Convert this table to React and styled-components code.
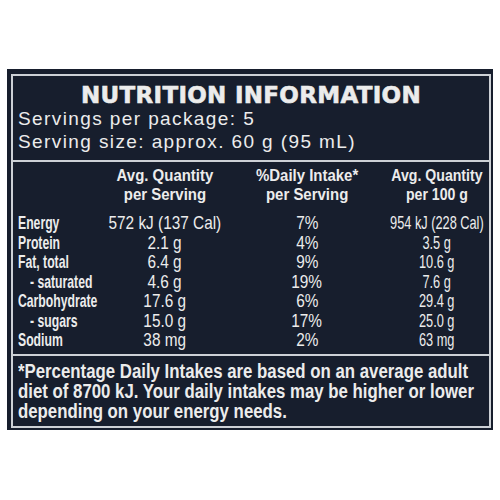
import React from 'react';
import styled, { createGlobalStyle } from 'styled-components';

const GlobalStyle = createGlobalStyle`
  html, body {
    margin: 0;
    padding: 0;
    background: #ffffff;
  }
`;

const Page = styled.div`
  width: 500px;
  height: 500px;
  padding: 69px 0 0 7px;
  box-sizing: border-box;
`;

const Panel = styled.div`
  width: 486px;
  height: 361px;
  box-sizing: border-box;
  padding: 5px 2px 2px 4px;
  background: #171e2d;
  color: #ececec;
`;

const Frame = styled.div`
  height: 100%;
  box-sizing: border-box;
  border: 2px solid #cdd1d6;
  display: flex;
  flex-direction: column;
  overflow: hidden;
`;

const Intro = styled.div`
  padding: 7px 0 7px 5px;
  border-bottom: 2px solid #cdd1d6;
`;

const Title = styled.h1`
  margin: 0;
  font-family: "DejaVu Sans", sans-serif;
  font-weight: bold;
  font-size: 23px;
  line-height: 24px;
  text-align: center;
  padding-right: 5px;
  letter-spacing: 0.3px;
  -webkit-text-stroke: 0.6px #ececec;
`;

const ServingLine = styled.div`
  font-family: "Liberation Sans", Arial, sans-serif;
  font-size: 19px;
  line-height: 23px;
  letter-spacing: 1.4px;
`;

const Table = styled.div`
  display: grid;
  grid-template-columns: 87px 119px 166px 94px;
  padding: 4px 0 4px 5px;
  border-bottom: 2px solid #cdd1d6;
  font-family: "Liberation Sans", Arial, sans-serif;
`;

/* the print uses a condensed face; squeeze a regular one to match */
const Squeeze = styled.span`
  display: inline-block;
  white-space: nowrap;
  transform: scaleX(${({ $x }) => $x});
  transform-origin: ${({ $origin }) => $origin || 'center'};
`;

const Head = styled.div`
  justify-self: center;
  text-align: center;
  font-weight: bold;
  font-size: 17px;
  line-height: 19px;
  margin-bottom: 9px;
`;

const Label = styled.div`
  font-weight: bold;
  font-size: 18.5px;
  line-height: 19.5px;
  padding-left: ${({ $sub }) => ($sub ? '12px' : '0')};
`;

const Value = styled.div`
  justify-self: center;
  font-size: 18.5px;
  line-height: 19.5px;
`;

const Footnote = styled.div`
  padding: 5px 0 0 5px;
  font-family: "Liberation Sans", Arial, sans-serif;
  font-weight: bold;
  font-size: 20px;
  line-height: 20px;
`;

const NoteLine = styled.div`
  white-space: nowrap;
`;

const rows = [
  { name: 'Energy', serve: '572 kJ (137 Cal)', di: '7%', per100: '954 kJ (228 Cal)' },
  { name: 'Protein', serve: '2.1 g', di: '4%', per100: '3.5 g' },
  { name: 'Fat, total', serve: '6.4 g', di: '9%', per100: '10.6 g' },
  { name: '- saturated', sub: true, serve: '4.6 g', di: '19%', per100: '7.6 g' },
  { name: 'Carbohydrate', serve: '17.6 g', di: '6%', per100: '29.4 g' },
  { name: '- sugars', sub: true, serve: '15.0 g', di: '17%', per100: '25.0 g' },
  { name: 'Sodium', serve: '38 mg', di: '2%', per100: '63 mg' },
];

const notes = [
  '*Percentage Daily Intakes are based on an average adult',
  'diet of 8700 kJ. Your daily intakes may be higher or lower',
  'depending on your energy needs.',
];

export default function App() {
  return (
    <Page>
      <GlobalStyle />
      <Panel>
        <Frame>
          <Intro>
            <Title>NUTRITION INFORMATION</Title>
            <ServingLine>Servings per package: 5</ServingLine>
            <ServingLine>Serving size: approx. 60 g (95 mL)</ServingLine>
          </Intro>
          <Table>
            <div />
            <Head><Squeeze $x={0.88}>Avg. Quantity<br />per Serving</Squeeze></Head>
            <Head><Squeeze $x={0.88}>%Daily Intake*<br />per Serving</Squeeze></Head>
            <Head><Squeeze $x={0.83}>Avg. Quantity<br />per 100 g</Squeeze></Head>
            {rows.map((r) => (
              <React.Fragment key={r.name}>
                <Label $sub={r.sub}><Squeeze $x={0.66} $origin="left">{r.name}</Squeeze></Label>
                <Value><Squeeze $x={0.83}>{r.serve}</Squeeze></Value>
                <Value><Squeeze $x={0.83}>{r.di}</Squeeze></Value>
                <Value><Squeeze $x={0.69}>{r.per100}</Squeeze></Value>
              </React.Fragment>
            ))}
          </Table>
          <Footnote>
            {notes.map((line) => (
              <NoteLine key={line}><Squeeze $x={0.84} $origin="left">{line}</Squeeze></NoteLine>
            ))}
          </Footnote>
        </Frame>
      </Panel>
    </Page>
  );
}
